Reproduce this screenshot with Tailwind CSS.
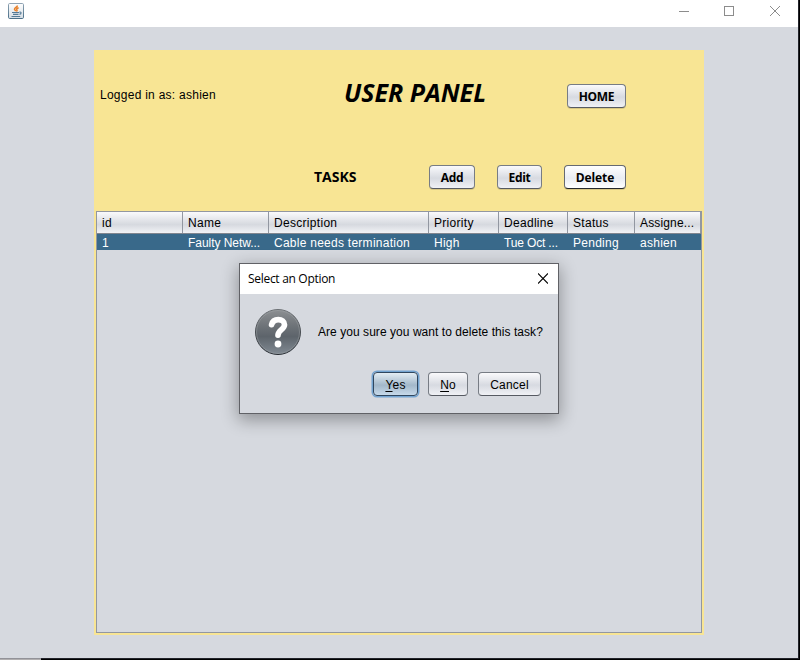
<!DOCTYPE html>
<html lang="en">
<head>
<meta charset="utf-8">
<title>User Panel</title>
<script src="https://cdn.jsdelivr.net/npm/@tailwindcss/browser@4"></script>
</head>
<body class="w-[800px] h-[660px] overflow-hidden bg-black font-['Liberation_Sans',Arial,sans-serif] text-[12px] leading-[16px] text-black whitespace-nowrap">
<div class="relative w-[800px] h-[660px] flex flex-col">
  <div class="w-[799px] h-[659px] shrink-0 bg-[#d6d9df] border-r border-b border-[#22232a] flex flex-col">
    <header class="h-[27px] shrink-0 bg-white flex items-start justify-between pl-2">
      <svg class="mt-[3px]" width="16" height="16" viewBox="0 0 16 16" fill="none">
        <defs><linearGradient id="jv" x1="0" y1="0" x2="0" y2="1"><stop offset="0" stop-color="#8fa3b3"/><stop offset="1" stop-color="#4b7089"/></linearGradient>
        <linearGradient id="jf" x1="0" y1="0" x2="0" y2="1"><stop offset="0" stop-color="#fff"/><stop offset="1" stop-color="#d5dde4"/></linearGradient></defs>
        <rect x=".5" y=".5" width="15" height="15" rx="1.2" fill="url(#jf)" stroke="url(#jv)"/>
        <path d="M9.400 2.500C9.600 4 6.500 4.800 6.500 6.200c0 .8 1 1 1 2M10.600 4.700c-1.800.6-2.400 1.300-1.700 2.200.5.600 0 1-.6 1.500" stroke="#e8812b" stroke-width="1.500"/>
        <path d="M4 9.500h7M5 11.400h5.500M3.500 13.500h8.700M11.300 9.200c2.300-.8 2.500 1.700.2 2.200" stroke="#547a96" stroke-width="1.100"/>
      </svg>
      <svg width="120" height="24" viewBox="678 0 120 24" fill="none" stroke="#8c8c8c" shape-rendering="crispEdges">
        <path d="M679 11.500h10"/><rect x="724.500" y="6.500" width="9" height="9"/>
        <path d="M770 6l10 10M780 6l-10 10" shape-rendering="auto"/>
      </svg>
    </header>
    <main class="ml-[94px] mt-[23px] w-[610px] h-[585px] bg-[#f8e594] px-0.5 pb-0.5 flex flex-col">
      <div class="h-[161px] shrink-0 flex flex-col">
        <div class="h-[92px] pt-[29px] flex items-start">
          <span class="w-[248px] pl-1 mt-2 tracking-[0.26px]">Logged in as: ashien</span>
          <h1 class="w-[223px] -mt-px font-['Open_Sans','Noto_Sans',sans-serif] font-bold italic text-[25px] leading-[28px] tracking-[0px]">USER PANEL</h1>
          <button class="mt-[5px] w-[59px] h-[24px] rounded-[4px] border border-[#777c84] border-b-[#565a62] bg-linear-to-b from-[#fafafc] via-[#d7dae1] via-55% to-[#f0f1f5] shadow-[0_1px_0_#d8c783] font-['Open_Sans','Noto_Sans',sans-serif] font-bold text-[12px] leading-[22px] tracking-[-0.3px]"><span class="block pt-px">HOME</span></button>
        </div>
        <div class="pt-[23px] flex items-start font-['Open_Sans','Noto_Sans',sans-serif] font-bold text-[12px]">
          <h2 class="w-[115px] ml-[218px] mt-1 text-[14px] tracking-[0px]">TASKS</h2>
          <button class="w-[46px] h-[24px] rounded-[4px] border border-[#777c84] border-b-[#565a62] bg-linear-to-b from-[#fafafc] via-[#d7dae1] via-55% to-[#f0f1f5] shadow-[0_1px_0_#d8c783] leading-[22px] tracking-[-0.3px]"><span class="block pt-px">Add</span></button>
          <button class="ml-[22px] w-[45px] h-[24px] rounded-[4px] border border-[#777c84] border-b-[#565a62] bg-linear-to-b from-[#fafafc] via-[#d7dae1] via-55% to-[#f0f1f5] shadow-[0_1px_0_#d8c783] leading-[22px] tracking-[-0.3px]"><span class="block pt-px">Edit</span></button>
          <button class="ml-[22px] w-[62px] h-[24px] rounded-[4px] border border-[#666a72] border-b-[#25282d] bg-linear-to-b from-white via-[#e9ecf2] via-55% to-white shadow-[0_1px_0_#d8c783] leading-[22px] tracking-[-0.1px]"><span class="block pt-px">Delete</span></button>
        </div>
      </div>
      <section class="w-[606px] h-[422px] border border-[#9297a1] bg-[#d6d9df]">
        <div class="h-[22px] grid grid-cols-[86px_86px_160px_70px_69px_67px_66px] bg-linear-to-b from-[#fafafc] via-[#d6d9df] via-60% to-[#f2f3f6] border-b border-[#81868f] leading-[23px] tracking-[0.3px] *:h-[21px] *:pl-[5px] *:border-r *:border-[#9297a1]">
          <div>id</div><div>Name</div><div>Description</div><div>Priority</div><div>Deadline</div><div>Status</div><div class="tracking-[0.15px]">Assigne...</div>
        </div>
        <div class="h-[16px] grid grid-cols-[86px_86px_160px_70px_69px_67px_66px] bg-[#39698a] text-white leading-[18px] tracking-[0.26px] *:pl-[5px]">
          <div>1</div><div class="tracking-[-0.05px]">Faulty Netw...</div><div>Cable needs termination</div><div>High</div><div class="tracking-[-0.15px]">Tue Oct ...</div><div>Pending</div><div>ashien</div>
        </div>
      </section>
    </main>
  </div>
  <div class="w-[41px] h-0.5 shrink-0 -mt-px bg-[#b1afb0] border-t border-[#929298]"></div>

  <div role="dialog" class="absolute left-[239px] top-[263px] w-[320px] h-[151px] border border-[#606166] bg-[#d6d9df] shadow-[0_5px_16px_1px_rgba(0,0,0,0.33)] flex flex-col">
    <div class="h-[30px] bg-white flex justify-between pl-2 pr-[10px]">
      <span class="font-['Open_Sans','Noto_Sans',sans-serif] text-[12px] leading-[30px] tracking-[-0.3px]">Select an Option</span>
      <svg class="mt-[9px]" width="10" height="11" viewBox="0 0 10 11" stroke="#000" stroke-width="1.100"><path d="M0 .5l10 10M10 .5l-10 10"/></svg>
    </div>
    <div class="flex pl-[14px] pt-[14px] items-start">
      <svg width="48" height="48" viewBox="0 0 48 48" fill="none">
        <defs><linearGradient id="q" x1="0" y1="0" x2="0" y2="1"><stop offset="0" stop-color="#8d9093"/><stop offset=".35" stop-color="#6f7479"/><stop offset=".6" stop-color="#5d646b"/><stop offset="1" stop-color="#818a93"/></linearGradient>
        <linearGradient id="r" x1="0" y1="0" x2="0" y2="1"><stop offset="0" stop-color="#6b6f73"/><stop offset="1" stop-color="#24292f"/></linearGradient></defs>
        <circle cx="24" cy="24" r="22.500" fill="url(#q)" stroke="url(#r)"/>
        <circle cx="24" cy="24" r="21.500" stroke="#a7acb0" stroke-opacity=".4"/>
        <path d="M17.600 16.700C18.500 13 21 11.600 24.300 11.600c3.500 0 6.200 1.900 6.200 5.100 0 4.800-6.200 5-6.500 10.400" stroke="#fff" stroke-width="5.700" stroke-linecap="round"/>
        <circle cx="24" cy="36" r="3.400" fill="#fff"/>
      </svg>
      <span class="ml-4 mt-4 tracking-[0.05px]">Are you sure you want to delete this task?</span>
    </div>
    <div class="flex justify-end gap-[10px] pr-[17px] pt-4 tracking-[0.2px]">
      <button class="w-[45px] h-[24px] rounded-[4px] border border-[#30475f] bg-linear-to-b from-[#e3edf4] via-[#a3b8ca] via-55% to-[#c6d9ea] shadow-[0_0_0_1.5px_#73a4d1] leading-[22px]"><span class="block pt-px"><u class="underline-offset-2">Y</u>es</span></button>
      <button class="w-[40px] h-[24px] rounded-[4px] border border-[#777c84] border-b-[#565a62] bg-linear-to-b from-[#fafafc] via-[#d7dae1] via-55% to-[#f0f1f5] leading-[22px]"><span class="block pt-px"><u class="underline-offset-2">N</u>o</span></button>
      <button class="w-[63px] h-[24px] rounded-[4px] border border-[#777c84] border-b-[#565a62] bg-linear-to-b from-[#fafafc] via-[#d7dae1] via-55% to-[#f0f1f5] leading-[22px]"><span class="block pt-px">Cancel</span></button>
    </div>
  </div>
</div>
</body>
</html>
